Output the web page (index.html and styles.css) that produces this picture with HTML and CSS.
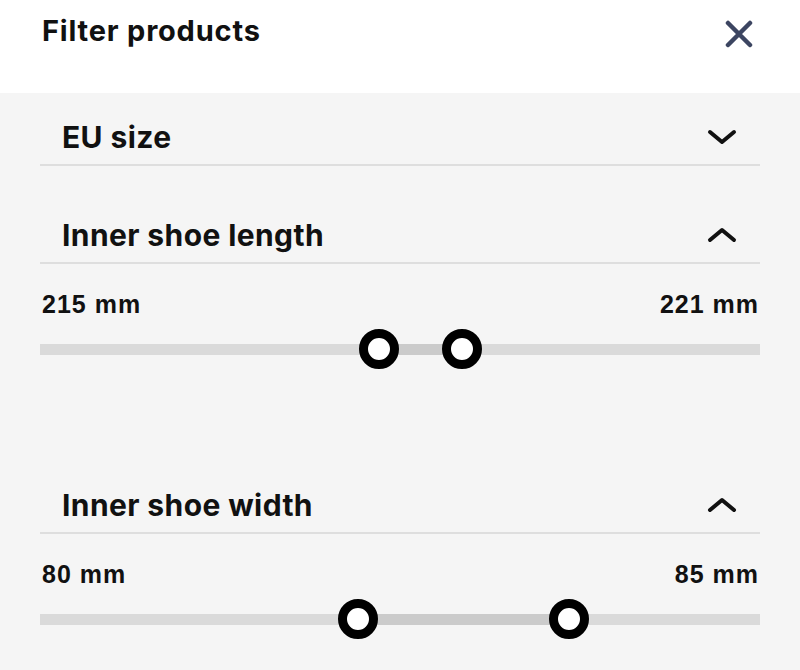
FILE: index.html
```html
<!doctype html>
<html lang="en">
<head>
    <meta charset="UTF-8">
    <meta name="viewport" content="width=device-width, initial-scale=1.0">
    <title>Filter products</title>
    <link rel="stylesheet" href="styles.css">
</head>
<body>
    <div class="top">
        <h1>Filter products</h1>
        <button class="close" aria-label="Close">
            <svg width="28" height="28" viewBox="0 0 28 28"><path d="M3 3 L25 25 M25 3 L3 25"/></svg>
        </button>
    </div>
    <div class="panel">
        <div class="item first">
            <div class="head">
                <span>EU size</span>
                <svg class="chev" width="30" height="16" viewBox="0 0 30 16"><polyline points="3,3 15,13 27,3"/></svg>
            </div>
        </div>
        <div class="item">
            <div class="head">
                <span>Inner shoe length</span>
                <svg class="chev" width="30" height="16" viewBox="0 0 30 16"><polyline points="3,13 15,3 27,13"/></svg>
            </div>
            <div class="body">
                <div class="labels"><span>215 mm</span><span>221 mm</span></div>
                <div class="slider">
                    <div class="track">
                        <div class="range" style="left:47.1%;width:11.5%"></div>
                    </div>
                    <div class="thumb" style="left:47.1%"></div>
                    <div class="thumb" style="left:58.6%"></div>
                </div>
            </div>
        </div>
        <div class="item last">
            <div class="head">
                <span>Inner shoe width</span>
                <svg class="chev" width="30" height="16" viewBox="0 0 30 16"><polyline points="3,13 15,3 27,13"/></svg>
            </div>
            <div class="body">
                <div class="labels"><span>80 mm</span><span>85 mm</span></div>
                <div class="slider">
                    <div class="track">
                        <div class="range" style="left:44.1%;width:29.4%"></div>
                    </div>
                    <div class="thumb" style="left:44.1%"></div>
                    <div class="thumb" style="left:73.5%"></div>
                </div>
            </div>
        </div>
    </div>
</body>
</html>
```
FILE: styles.css
```css
*{
    padding:0;
    margin:0;
    box-sizing:border-box;
}
body{
    background:#f5f5f5;
    font-family:Inter,Lato,"Noto Sans",sans-serif;
    color:#111;
    width:800px;
    height:670px;
    overflow:hidden;
}
.top{
    height:93px;
    background:#fff;
    display:flex;
    justify-content:space-between;
    align-items:flex-start;
    padding:13px 47px 0 42px;
}
.top h1{
    font-size:29px;
    line-height:36px;
    font-weight:700;
    letter-spacing:0.8px;
}
.close{
    border:0;
    background:none;
    margin-top:7px;
    width:28px;
    height:28px;
    cursor:pointer;
}
.close svg{
    display:block;
}
.close path{
    stroke:#3c4561;
    stroke-width:4.5;
    stroke-linecap:round;
    fill:none;
}
.panel{
    padding:0 40px;
}
.item{
    padding-top:40px;
}
.item.first{
    padding-top:15px;
}
.head{
    height:58px;
    display:flex;
    justify-content:space-between;
    align-items:center;
    padding:2px 23px 0 22px;
    border-bottom:2px solid #dedede;
    font-size:30px;
    font-weight:700;
    letter-spacing:0.4px;
}
.chev polyline{
    fill:none;
    stroke:#111;
    stroke-width:4;
    stroke-linecap:round;
    stroke-linejoin:round;
}
.body{
    padding:25px 0 67px;
}
.item.last .body{
    padding-bottom:0;
}
.labels{
    display:flex;
    justify-content:space-between;
    padding:0 2px;
    font-family:"Liberation Sans",Arial,sans-serif;
    font-weight:700;
    font-size:25px;
    line-height:30px;
    letter-spacing:1px;
}
.labels span:last-child{
    margin-right:-1px;
}
.slider{
    position:relative;
    height:40px;
    margin-top:10px;
    display:flex;
    align-items:center;
}
.track{
    position:relative;
    width:100%;
    height:11px;
    background:#dadada;
}
.range{
    position:absolute;
    top:0;
    height:11px;
    background:#cbcbcb;
}
.thumb{
    position:absolute;
    top:0;
    width:40px;
    height:40px;
    margin-left:-20px;
    border-radius:50%;
    border:9px solid #000;
    background:#fff;
}
```
